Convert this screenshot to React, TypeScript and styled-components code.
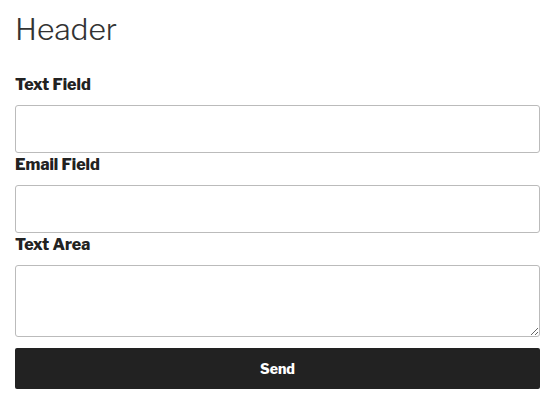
import React from 'react';
import styled, { createGlobalStyle } from 'styled-components';

const GlobalStyle = createGlobalStyle`
  html, body {
    margin: 0;
    padding: 0;
    background: #fff;
  }
  body {
    font-family: "Libre Franklin", "Open Sans", "Liberation Sans", sans-serif;
    color: #222;
  }
`;

const Page = styled.div`
  width: 525px;
  padding: 0 13px 0 15px;
`;

const Header = styled.h1`
  margin: 0;
  padding-top: 11px;
  font-size: 30px;
  font-weight: 300;
  line-height: 36px;
  color: #333;
`;

const Form = styled.form`
  display: flex;
  flex-direction: column;
  margin-top: 26px;
`;

const Label = styled.label`
  display: block;
  font-size: 16px;
  font-weight: 800;
  line-height: 24px;
  color: #222;
  margin-bottom: 8px;
`;

const Field = styled.div`
  display: flex;
  flex-direction: column;
`;

const Input = styled.input`
  box-sizing: border-box;
  width: 100%;
  height: 48px;
  margin: 0;
  border: 1px solid #bbb;
  border-radius: 3px;
  background: #fff;
  font: inherit;
`;

const TextArea = styled.textarea`
  box-sizing: border-box;
  width: 100%;
  height: 72px;
  margin: 0;
  border: 1px solid #bbb;
  border-radius: 3px;
  background: #fff;
  font: inherit;
  resize: vertical;
  display: block;
`;

const Button = styled.button`
  margin-top: 11px;
  height: 41px;
  width: 100%;
  border: none;
  border-radius: 2px;
  background: #222;
  color: #fff;
  font-family: inherit;
  font-size: 14px;
  font-weight: 800;
`;

export default function App() {
  return (
    <>
      <GlobalStyle />
      <Page>
        <Header>Header</Header>
        <Form onSubmit={(e) => e.preventDefault()}>
          <Field>
            <Label>Text Field</Label>
            <Input type="text" />
          </Field>
          <Field>
            <Label>Email Field</Label>
            <Input type="email" />
          </Field>
          <Field>
            <Label>Text Area</Label>
            <TextArea />
          </Field>
          <Button type="submit">Send</Button>
        </Form>
      </Page>
    </>
  );
}
